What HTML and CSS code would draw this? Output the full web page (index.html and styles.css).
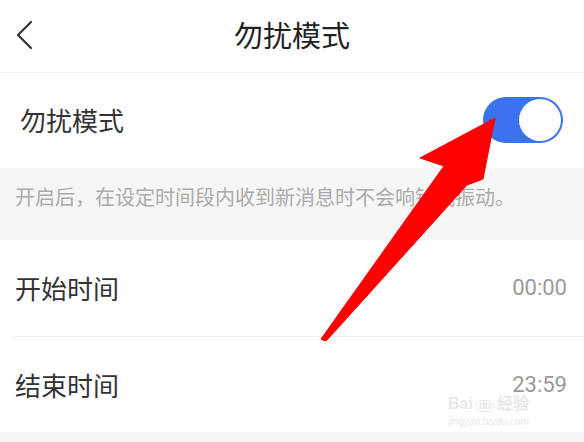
FILE: index.html
```html
<!DOCTYPE html>
<html lang="zh-CN">
<head>
    <meta charset="UTF-8">
    <meta name="viewport" content="width=device-width, initial-scale=1.0">
    <title>勿扰模式</title>
    <link rel="stylesheet" href="styles.css">
</head>
<body>
<div class="page">
    <div class="header">
        <div class="back">
            <svg width="20" height="32" viewBox="0 0 20 32">
                <polyline points="15,3 2,16 15,29" fill="none" stroke="#333" stroke-width="2.2" stroke-linecap="round" stroke-linejoin="round"/>
            </svg>
        </div>
        <div class="title">勿扰模式</div>
        <div></div>
    </div>

    <div class="row row-top">
        <span class="label">勿扰模式</span>
        <div class="switch"><div class="knob"></div></div>
    </div>

    <div class="note">开启后，在设定时间段内收到新消息时不会响铃或振动。</div>

    <div class="row">
        <span class="label">开始时间</span>
        <span class="value">00:00</span>
    </div>
    <div class="divider"></div>
    <div class="row">
        <span class="label">结束时间</span>
        <span class="value">23:59</span>
    </div>
    <div class="bottom"></div>

    <div class="watermark">
        <div class="wm-logo">Bai<span class="wm-du">du</span>经验</div>
        <div class="wm-url">jingyan.baidu.com</div>
    </div>

    <svg class="arrow" width="584" height="442" viewBox="0 0 584 442">
        <polygon points="495,118 483,179 467,185 328,339 325,341 321,339 444,166 420,158" fill="#fe0000" stroke="#fe0000" stroke-width="1" stroke-linejoin="round"/>
    </svg>
</div>
</body>
</html>
```

FILE: styles.css
```css
* {
    margin: 0;
    padding: 0;
    box-sizing: border-box;
}

body {
    width: 584px;
    height: 442px;
    overflow: hidden;
    background: #ffffff;
    font-family: "Noto Sans CJK SC", "Noto Sans", sans-serif;
    color: #333333;
}

.page {
    position: relative;
    width: 584px;
    height: 442px;
}

.header {
    height: 73px;
    display: grid;
    grid-template-columns: 1fr auto 1fr;
    align-items: center;
    border-bottom: 1px solid #f1f1f1;
}

.back {
    padding-left: 16px;
    padding-bottom: 2px;
    display: flex;
    align-items: center;
}

.title {
    font-size: 29px;
    line-height: 1;
    color: #222222;
    padding-bottom: 4px;
}

.row {
    height: 96px;
    display: flex;
    align-items: center;
    justify-content: space-between;
    padding: 0 17px 0 15px;
}

.row-top {
    height: 95px;
    padding: 0 21px 0 20px;
    padding-bottom: 2px;
}

.label {
    font-size: 26px;
    line-height: 1;
    color: #333333;
}

.value {
    font-family: "Roboto", "Noto Sans CJK SC", sans-serif;
    font-size: 22px;
    line-height: 1;
    color: #9a9a9a;
}

.switch {
    width: 80px;
    height: 46px;
    border-radius: 23px;
    background: #3b72ee;
    padding: 2px;
    display: flex;
    justify-content: flex-end;
}

.knob {
    width: 42px;
    height: 42px;
    border-radius: 50%;
    background: #ffffff;
}

.note {
    height: 72px;
    background: #f6f6f6;
    padding: 17px 15px 0;
    font-size: 20px;
    line-height: 1.2;
    color: #ababab;
}

.divider {
    height: 1px;
    margin-left: 13px;
    background: #eeeeee;
}

.row + .divider + .row {
    height: 95px;
}

.bottom {
    height: 12px;
    background: #f6f6f6;
}

.watermark {
    position: absolute;
    left: 448px;
    top: 396px;
    color: #e8e8e8;
    font-family: "Liberation Sans", sans-serif;
    text-align: center;
}

.wm-logo {
    font-size: 16px;
    font-weight: bold;
    line-height: 1;
}

.wm-du {
    display: inline-block;
    font-size: 10px;
    border: 1px solid #e8e8e8;
    border-radius: 8px;
    padding: 0 2px;
    margin: 0 3px;
}

.wm-url {
    font-size: 10px;
    line-height: 1;
    margin-top: 5px;
}

.arrow {
    position: absolute;
    left: 0;
    top: 0;
}
```
